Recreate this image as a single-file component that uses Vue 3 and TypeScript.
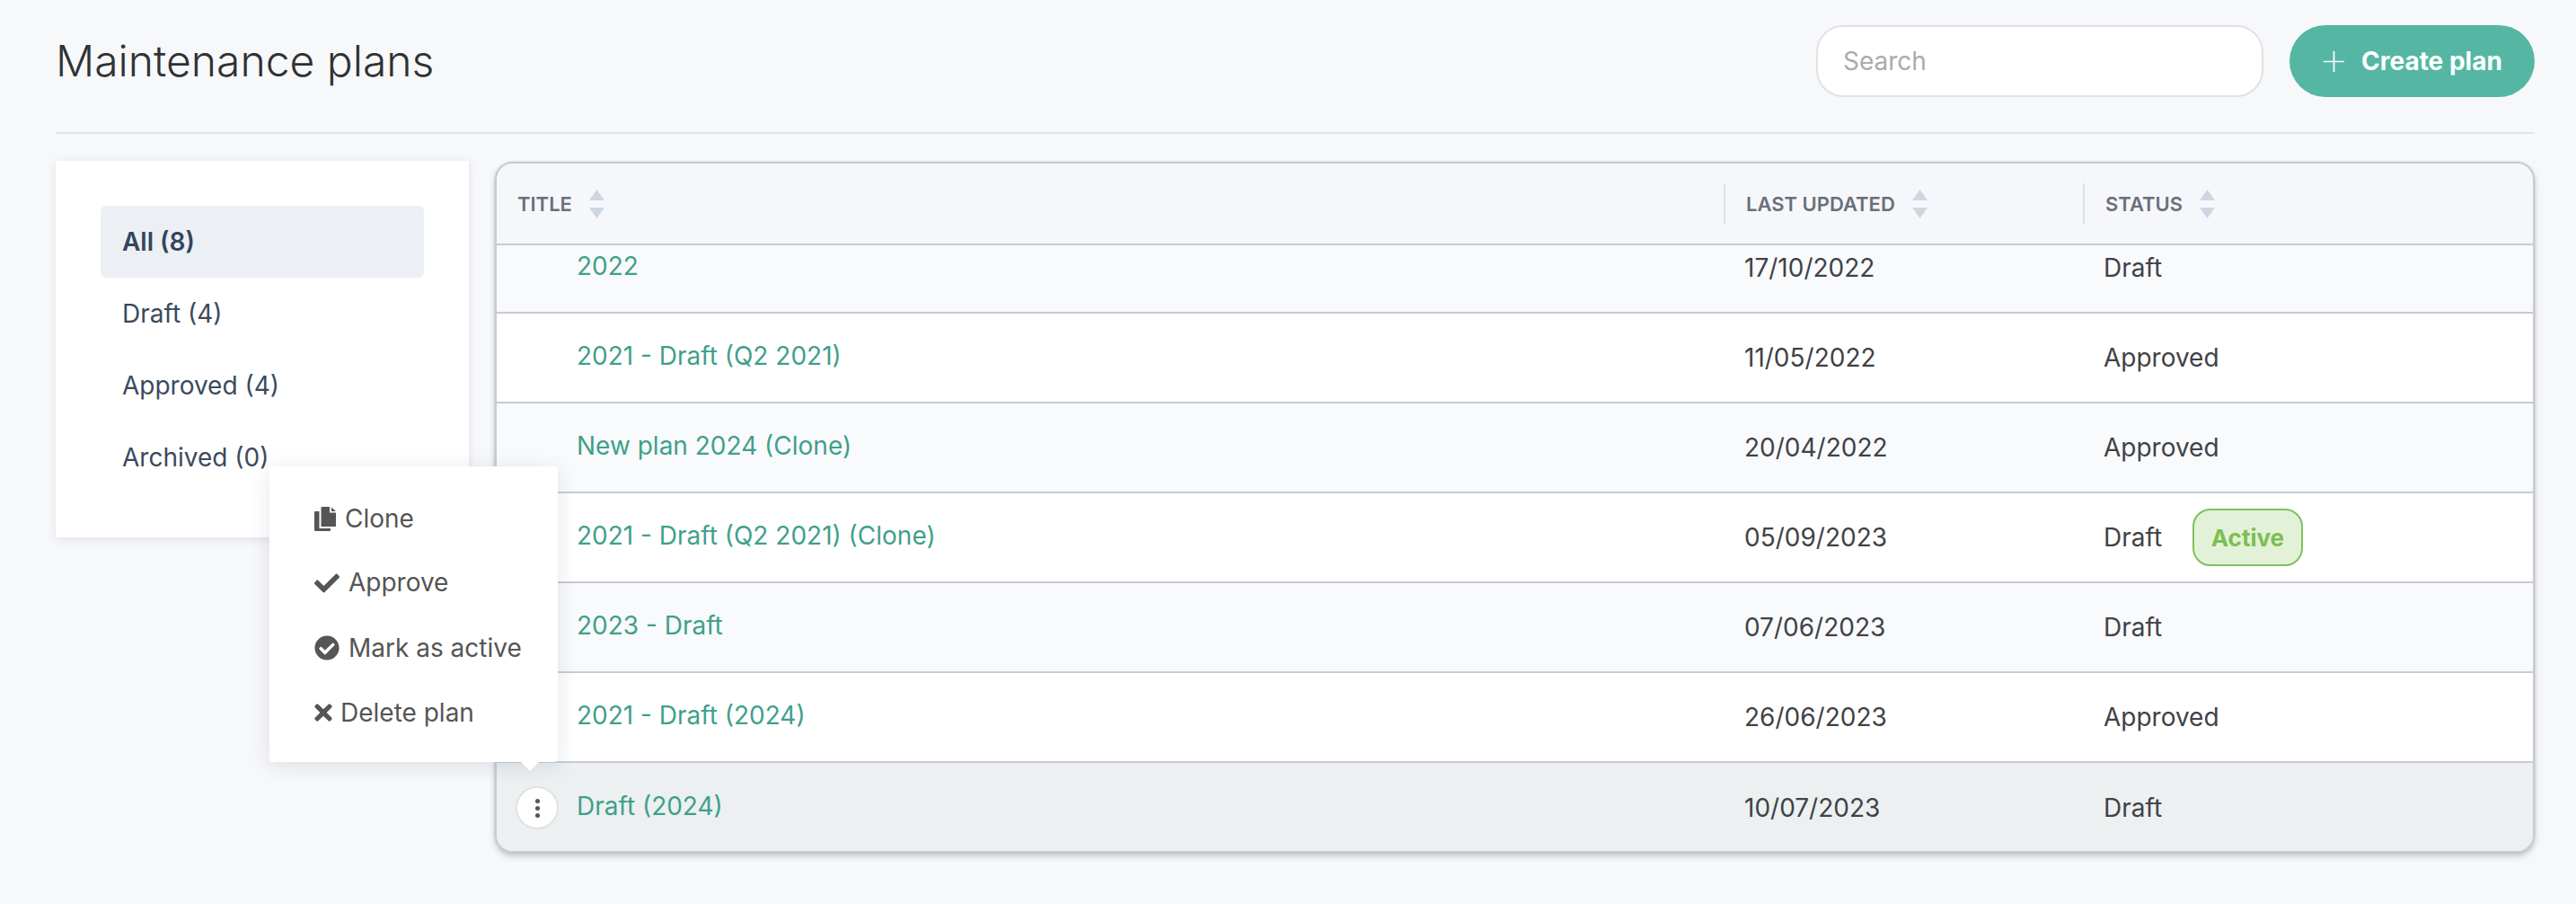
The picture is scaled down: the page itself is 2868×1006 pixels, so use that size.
<script setup lang="ts">
interface Row { title: string; date: string; status: string; active?: boolean; selected?: boolean }
const filters = ['All (8)', 'Draft (4)', 'Approved (4)', 'Archived (0)']
const columns = ['Title', 'Last updated', 'Status']
const rows: Row[] = [
  { title: '2022', date: '17/10/2022', status: 'Draft' },
  { title: '2021 - Draft (Q2 2021)', date: '11/05/2022', status: 'Approved' },
  { title: 'New plan 2024 (Clone)', date: '20/04/2022', status: 'Approved' },
  { title: '2021 - Draft (Q2 2021) (Clone)', date: '05/09/2023', status: 'Draft', active: true },
  { title: '2023 - Draft', date: '07/06/2023', status: 'Draft' },
  { title: '2021 - Draft (2024)', date: '26/06/2023', status: 'Approved' },
  { title: 'Draft (2024)', date: '10/07/2023', status: 'Draft', selected: true },
]
</script>

<template>
  <div class="page">
    <header class="top">
      <h1 class="heading">Maintenance plans</h1>
      <div class="actions">
        <input class="search" type="text" placeholder="Search" />
        <button class="create" type="button">
          <svg class="plus" viewBox="0 0 24 24"><path d="M12 0v24M0 12h24" /></svg>
          <span>Create plan</span>
        </button>
      </div>
    </header>

    <div class="content">
      <aside class="side">
        <a v-for="(f, i) in filters" :key="f" class="filter" :class="{ on: i === 0 }">{{ f }}</a>
      </aside>

      <section class="table">
        <div class="thead grid">
          <div v-for="c in columns" :key="c" class="th">
            <span>{{ c }}</span>
            <svg class="sort" viewBox="0 0 17 32">
              <path d="M8.5 0L17 12H0z" />
              <path d="M0 20h17L8.5 32z" />
            </svg>
          </div>
        </div>
        <div class="tbody">
          <div class="rows">
            <div v-for="r in rows" :key="r.title" class="row grid" :class="{ selected: r.selected }">
              <div class="cell title-cell">
                <button v-if="r.selected" class="kebab" type="button" aria-label="Actions">
                  <i /><i /><i />
                </button>
                <a class="link">{{ r.title }}</a>
              </div>
              <div class="cell">{{ r.date }}</div>
              <div class="cell">
                {{ r.status }}
                <span v-if="r.active" class="badge">Active</span>
              </div>
            </div>
          </div>
        </div>
      </section>

      <div class="menu">
        <div class="menu-item">
          <svg class="ic clone" viewBox="0 0 24 27"><path d="M8.5 0H17v6.5h7V21a1 1 0 0 1-1 1H7.5V1a1 1 0 0 1 1-1zM19 0.5L24 5h-5z" /><path d="M1 5h4.5v19H18v2a1 1 0 0 1-1 1H1a1 1 0 0 1-1-1V6a1 1 0 0 1 1-1z" /></svg>
          <span>Clone</span>
        </div>
        <div class="menu-item up">
          <svg class="ic check" viewBox="0 0 512 512"><path d="M173.898 439.404l-166.4-166.4c-9.997-9.997-9.997-26.206 0-36.204l36.203-36.204c9.997-9.998 26.207-9.998 36.204 0L192 312.69 432.095 72.596c9.997-9.997 26.207-9.997 36.204 0l36.203 36.204c9.997 9.997 9.997 26.206 0 36.204l-294.4 294.401c-9.998 9.997-26.207 9.997-36.204-.001z" /></svg>
          <span>Approve</span>
        </div>
        <div class="menu-item">
          <svg class="ic check" viewBox="0 0 512 512"><path d="M504 256c0 136.967-111.033 248-248 248S8 392.967 8 256 119.033 8 256 8s248 111.033 248 248zM227.314 387.314l184-184c6.248-6.248 6.248-16.379 0-22.627l-22.627-22.627c-6.248-6.249-16.379-6.249-22.628 0L216 308.118l-70.059-70.059c-6.248-6.248-16.379-6.248-22.628 0l-22.627 22.627c-6.248 6.248-6.248 16.379 0 22.627l104 104c6.249 6.249 16.379 6.249 22.628.001z" /></svg>
          <span>Mark as active</span>
        </div>
        <div class="menu-item">
          <svg class="ic times" viewBox="0 0 352 512"><path d="M242.72 256l100.07-100.07c12.28-12.28 12.28-32.19 0-44.48l-22.24-22.24c-12.28-12.28-32.19-12.28-44.48 0L176 189.28 75.93 89.21c-12.28-12.28-32.19-12.28-44.48 0L9.21 111.45c-12.28 12.28-12.28 32.19 0 44.48L109.28 256 9.21 356.07c-12.28 12.28-12.28 32.19 0 44.48l22.24 22.24c12.28 12.28 32.2 12.28 44.48 0L176 322.72l100.07 100.07c12.28 12.28 32.2 12.28 44.48 0l22.24-22.24c12.28-12.28 12.28-32.19 0-44.48L242.72 256z" /></svg>
          <span>Delete plan</span>
        </div>
      </div>
    </div>
  </div>
</template>

<style>
html, body { background: #f7f8fa; }
</style>

<style scoped>
.page {
  box-sizing: border-box;
  height: 1006px;
  padding: 0 46px 0 62px;
  font-family: Inter, "Liberation Sans", sans-serif;
  color: #3f4246;
  overflow: hidden;
}
.top {
  box-sizing: border-box;
  height: 149px;
  padding-top: 28px;
  display: flex;
  justify-content: space-between;
  align-items: flex-start;
  border-bottom: 2px solid #e0e6ee;
}
.heading {
  margin: 0;
  font-size: 48px;
  line-height: 80px;
  font-weight: 300;
  color: #2f3235;
}
.actions { display: flex; gap: 29px; }
.search {
  box-sizing: border-box;
  width: 498px;
  height: 80px;
  padding: 0 28px;
  border: 2px solid #dfe1e7;
  border-radius: 30px;
  background: #fff;
  font: 400 28px Inter, sans-serif;
  outline: none;
}
.search::placeholder { color: #a9abae; opacity: 1; }
.create {
  box-sizing: border-box;
  width: 273px;
  height: 80px;
  padding: 0 0 0 38px;
  display: flex;
  align-items: center;
  gap: 19px;
  border: 0;
  border-radius: 40px;
  background: #55b7a3;
  color: #fff;
  font: 700 28px Inter, sans-serif;
}
.plus { width: 23px; height: 23px; fill: none; stroke: #fff; stroke-width: 1.8; }
.content {
  position: relative;
  margin-top: 30px;
  display: flex;
  gap: 29px;
  align-items: flex-start;
}
.side {
  box-sizing: border-box;
  width: 460px;
  height: 419px;
  padding: 50px;
  background: #fff;
  box-shadow: 0 2px 10px rgba(70, 80, 110, 0.14);
}
.filter {
  display: flex;
  align-items: center;
  height: 80px;
  padding-left: 24px;
  border-radius: 6px;
  font-size: 28px;
  color: #3a4a5e;
}
.filter.on { background: #ecf0f4; font-weight: 600; color: #34455e; }
.table {
  box-sizing: border-box;
  position: relative;
  flex: 1;
  height: 769px;
  margin-top: 1px;
  border: 2px solid #c9cad5;
  border-radius: 20px;
  overflow: hidden;
  box-shadow: 0 4px 6px rgba(70, 75, 100, 0.28), 0 0 2px rgba(70, 75, 100, 0.3);
}
.grid { display: grid; grid-template-columns: 1366px 400px 1fr; }
.thead {
  box-sizing: border-box;
  height: 91px;
  background: #f6f7fb;
  border-bottom: 2px solid #c9cad5;
}
.th {
  display: flex;
  align-items: center;
  gap: 19px;
  height: 45px;
  margin-top: 22px;
  padding-left: 23px;
  border-left: 2px solid #dfe1e7;
  font-size: 22px;
  font-weight: 600;
  text-transform: uppercase;
  color: #697079;
}
.th:first-child { border-left: 0; }
.sort { width: 17px; height: 32px; fill: #ced6e2; }
.tbody { height: 676px; overflow: hidden; }
.rows { margin-top: -24px; }
.row {
  box-sizing: border-box;
  height: 100px;
  border-bottom: 2px solid #c9cad5;
  background: #fff;
}
.row:nth-child(odd) { background: #f9fafc; }
.row:last-child { border-bottom: 0; }
.row.selected { background: #ecf0f1; }
.cell {
  display: flex;
  align-items: center;
  padding-left: 23px;
  font-size: 28px;
  color: #3f4246;
  white-space: pre;
}
.title-cell { position: relative; padding: 0 0 4px 89px; }
.link { color: #3fa08a; }
.kebab {
  position: absolute;
  left: 21px;
  top: 26px;
  box-sizing: border-box;
  width: 48px;
  height: 48px;
  padding: 0;
  display: flex;
  flex-direction: column;
  align-items: center;
  justify-content: center;
  gap: 3px;
  border: 2px solid #e0e2e6;
  border-radius: 50%;
  background: #fff;
}
.kebab i { width: 5px; height: 5px; border-radius: 50%; background: #555; }
.badge {
  box-sizing: border-box;
  display: inline-flex;
  align-items: center;
  justify-content: center;
  width: 123px;
  height: 64px;
  margin-left: 26px;
  border: 2px solid #7fc15b;
  border-radius: 20px;
  background: #e4f1d9;
  color: #7ac04f;
  font-size: 26px;
  font-weight: 700;
}
.menu {
  box-sizing: border-box;
  position: absolute;
  left: 238px;
  top: 340px;
  width: 321px;
  height: 329px;
  padding: 22px 0 0 50px;
  background: #fff;
  border-radius: 4px;
  box-shadow: 0 4px 22px rgba(60, 70, 100, 0.14);
  color: #555;
  font-size: 28px;
}
.menu::after {
  content: "";
  position: absolute;
  left: 280px;
  bottom: -10px;
  border-left: 10px solid transparent;
  border-right: 10px solid transparent;
  border-top: 10px solid #fff;
}
.menu-item { display: flex; align-items: center; height: 72px; }
.menu-item.up span { margin-top: -2px; }
.ic { fill: #555; flex: none; }
.clone { width: 24px; height: 27px; margin-right: 10px; }
.check { width: 28px; height: 28px; margin-right: 10px; }
.times { width: 20px; height: 28px; margin-right: 9px; }
</style>
